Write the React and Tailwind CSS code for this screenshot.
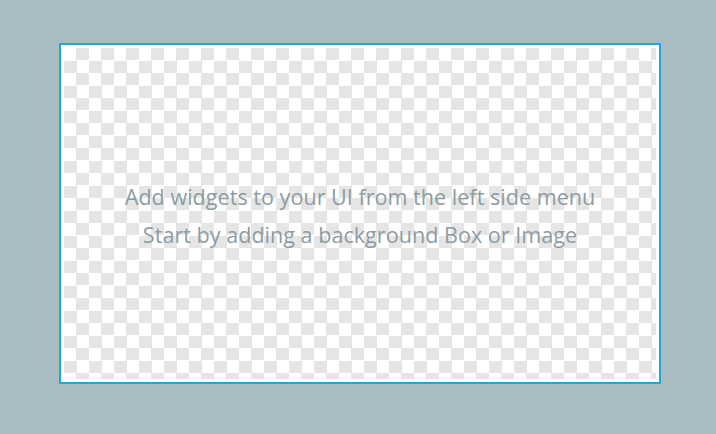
import React from 'react';

const App = () => {
  return (
    <div className="w-[716px] h-[434px] bg-[#a9bcc2] pl-[59px] pt-[43px]">
      <div className="w-[602px] h-[341px] border-2 border-[#22a5de] bg-white p-[3px]">
        <div className="w-full h-full flex flex-col items-center justify-center bg-[conic-gradient(#e5e5e5_25%,#ffffff_0_50%,#e5e5e5_0_75%,#ffffff_0)] bg-[length:25px_25px] pt-[5px]">
          <p className="text-[21.6px] leading-[38px] text-[#8d9ca3] font-['Open_Sans',sans-serif]">
            Add widgets to your UI from the left side menu
          </p>
          <p className="text-[21.6px] leading-[38px] text-[#8d9ca3] font-['Open_Sans',sans-serif]">
            Start by adding a background Box or Image
          </p>
        </div>
      </div>
    </div>
  );
};

export default App;
